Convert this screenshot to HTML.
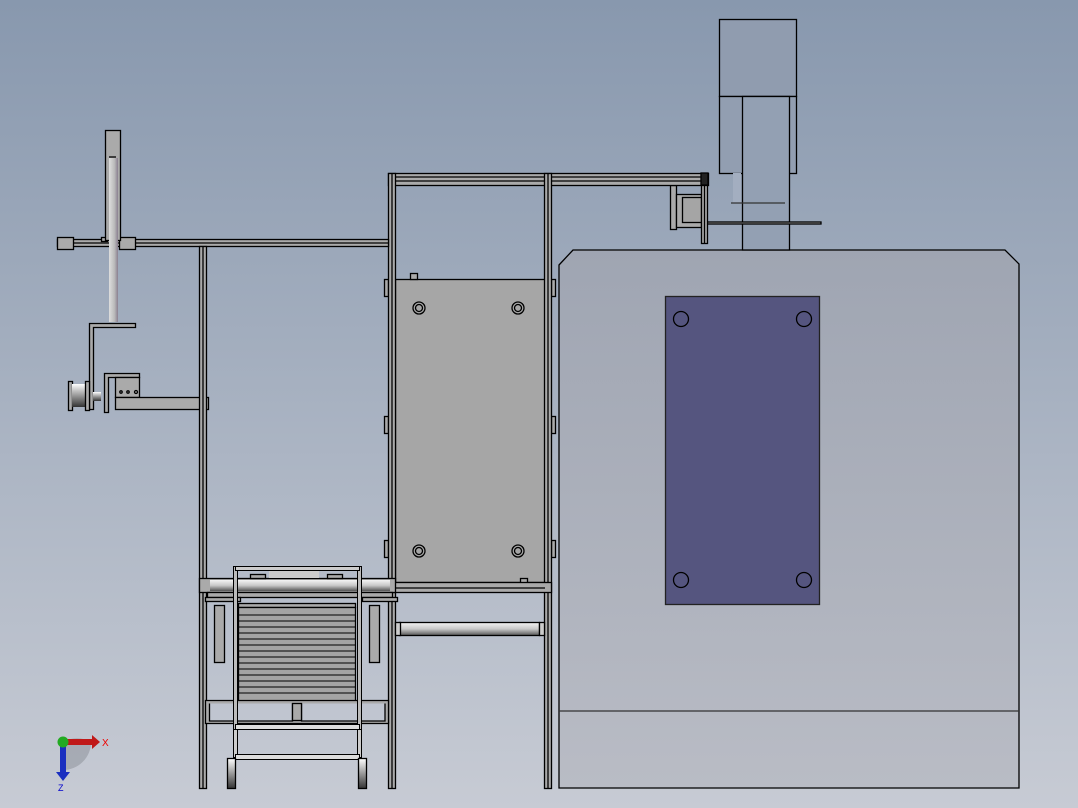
<!DOCTYPE html>
<html><head><meta charset="utf-8"><style>html,body{margin:0;padding:0;width:1078px;height:808px;overflow:hidden}svg{display:block}</style></head>
<body>
<svg width="1078" height="808" viewBox="0 0 1078 808" xmlns="http://www.w3.org/2000/svg">
<defs>
<linearGradient id="bg" x1="0" y1="0" x2="0" y2="1"><stop offset="0" stop-color="#8898ae"/><stop offset="1" stop-color="#c7cbd4"/></linearGradient>
<linearGradient id="body" x1="0" y1="0" x2="0" y2="1"><stop offset="0" stop-color="#9fa5b2"/><stop offset="1" stop-color="#b9bcc5"/></linearGradient>
<linearGradient id="rod" x1="0" y1="0" x2="0" y2="1"><stop offset="0" stop-color="#f4f4f4"/><stop offset="0.5" stop-color="#c8c8c8"/><stop offset="1" stop-color="#555"/></linearGradient>
<linearGradient id="rodv" x1="0" y1="0" x2="1" y2="0"><stop offset="0" stop-color="#ddd"/><stop offset="0.6" stop-color="#bbb"/><stop offset="1" stop-color="#8a8090"/></linearGradient>
<linearGradient id="wheel" x1="0" y1="0" x2="0" y2="1"><stop offset="0" stop-color="#fff"/><stop offset="1" stop-color="#333"/></linearGradient>
</defs>
<rect width="1078" height="808" fill="url(#bg)"/>
<g stroke="#000" stroke-width="1.3" fill="none">
<!-- machine body -->
<path d="M559,265 L573,250 L1005,250 L1019,264 L1019,788 L559,788 Z" fill="url(#body)"/>
<line x1="559" y1="711" x2="1019" y2="711" stroke="#333"/>
<rect x="665.5" y="296.5" width="154" height="308" fill="#55557f" stroke="#222"/>
<circle cx="681" cy="319" r="7.5"/><circle cx="804" cy="319" r="7.5"/><circle cx="681" cy="580" r="7.5"/><circle cx="804" cy="580" r="7.5"/>
<!-- motor -->
<rect x="719.5" y="19.5" width="77" height="77" fill="#909caf"/>
<rect x="719.5" y="96.5" width="77" height="77" fill="#929eb1"/>
<rect x="742.5" y="96.5" width="47" height="153.5" fill="#93a0b3"/>
<rect x="733" y="173" width="8" height="30" fill="#a3aec0" stroke="none"/>
<line x1="731" y1="203" x2="785" y2="203" stroke="#333"/>
<rect x="680" y="222" width="141" height="2" fill="#aaa"/>
<!-- right small bracket -->
<rect x="670.5" y="185.5" width="6" height="44" fill="#aaa"/>
<rect x="676.5" y="194.5" width="25" height="33" fill="#aaa"/>
<rect x="682.5" y="197.5" width="19" height="25" fill="#a5a5a5"/>
<rect x="701.5" y="173.5" width="6" height="70" fill="#aaa"/>
<line x1="704.5" y1="186" x2="704.5" y2="243"/>
<!-- middle frame top beam -->
<rect x="388.5" y="173.5" width="320" height="12" fill="#aaa"/>
<line x1="388" y1="177" x2="708" y2="177"/><line x1="388" y1="181" x2="708" y2="181"/>
<rect x="701" y="173" width="7" height="12" fill="#222"/>
<!-- gray panel -->
<rect x="395.5" y="279.5" width="150" height="303" fill="#a6a6a6"/>
<rect x="410.5" y="273.5" width="7" height="6" fill="#aaa"/>
<rect x="520.5" y="578.5" width="7" height="6" fill="#aaa"/>
<g fill="none"><circle cx="419" cy="308" r="6"/><circle cx="419" cy="308" r="3.5"/><circle cx="518" cy="308" r="6"/><circle cx="518" cy="308" r="3.5"/><circle cx="419" cy="551" r="6"/><circle cx="419" cy="551" r="3.5"/><circle cx="518" cy="551" r="6"/><circle cx="518" cy="551" r="3.5"/></g>
<rect x="384.5" y="279.5" width="4" height="17" fill="#aaa"/><rect x="384.5" y="416.5" width="4" height="17" fill="#aaa"/><rect x="384.5" y="540.5" width="4" height="17" fill="#aaa"/>
<rect x="551.5" y="279.5" width="4" height="17" fill="#aaa"/><rect x="551.5" y="416.5" width="4" height="17" fill="#aaa"/><rect x="551.5" y="540.5" width="4" height="17" fill="#aaa"/>
<!-- mid posts -->
<rect x="388.5" y="173.5" width="7" height="615" fill="#aaa"/><line x1="392" y1="173" x2="392" y2="788"/>
<rect x="544.5" y="173.5" width="7" height="615" fill="#aaa"/><line x1="548" y1="173" x2="548" y2="788"/>
<!-- mid lower beam -->
<rect x="388.5" y="582.5" width="163" height="10" fill="#aaa"/><line x1="395" y1="588" x2="545" y2="588"/>
<rect x="399.5" y="622.5" width="140" height="13" fill="url(#rod)"/>
<rect x="395.5" y="622.5" width="5" height="13" fill="#ccc"/><rect x="539.5" y="622.5" width="5" height="13" fill="#ccc"/>
<!-- left top beam -->
<rect x="57.5" y="239.5" width="331" height="7" fill="#aaa"/><line x1="57" y1="243" x2="388" y2="243"/>
<rect x="57.5" y="237.5" width="16" height="12" fill="#aaa"/>
<rect x="119.5" y="237.5" width="16" height="12" fill="#aaa"/>
<rect x="101.5" y="237.5" width="6" height="4" fill="#aaa"/>
<!-- left vertical rod assembly -->
<rect x="105.5" y="130.5" width="15" height="110" fill="#aaa"/>
<rect x="109" y="158" width="9" height="164" fill="url(#rodv)" stroke="none"/>
<line x1="109" y1="157" x2="116" y2="157"/>
<!-- L bracket -->
<path d="M89.5,323.5 L135.5,323.5 L135.5,327.5 L93.5,327.5 L93.5,409.5 L89.5,409.5 Z" fill="#aaa"/>
<!-- spool -->
<rect x="68.5" y="381.5" width="4" height="29" fill="#aaa"/>
<rect x="72" y="384" width="13" height="23" fill="url(#wheel)" stroke="none"/>
<rect x="85.5" y="381.5" width="4" height="29" fill="#aaa"/>
<rect x="93" y="392" width="8" height="9" fill="url(#wheel)" stroke="none"/>
<path d="M104.5,412.5 L104.5,373.5 L139.5,373.5 L139.5,377.5 L108.5,377.5 L108.5,412.5 Z" fill="#aaa"/>
<rect x="115.5" y="377.5" width="24" height="20" fill="#aaa"/>
<rect x="115.5" y="397.5" width="93" height="12" fill="#aaa"/>
<circle cx="121" cy="392" r="1.2"/><circle cx="128" cy="392" r="1.2"/><circle cx="136" cy="392" r="1.5"/>
<!-- left post -->
<rect x="199.5" y="246.5" width="7" height="542" fill="#aaa"/><line x1="203" y1="246" x2="203" y2="788"/>
<!-- left lower machine -->
<rect x="199.5" y="578.5" width="196" height="14" fill="#aaa"/>
<rect x="210" y="580" width="180" height="11" fill="url(#rod)" stroke="none"/>
<rect x="207.5" y="592.5" width="185" height="5" fill="#aaa"/>
<rect x="205.5" y="597.5" width="35" height="4" fill="#aaa"/>
<rect x="362.5" y="597.5" width="35" height="4" fill="#aaa"/>
<rect x="214.5" y="605.5" width="10" height="57" fill="#aaa"/>
<rect x="369.5" y="605.5" width="10" height="57" fill="#aaa"/>
<rect x="238.5" y="603.5" width="117" height="4" fill="#aaa"/>
<rect x="238.5" y="607.5" width="117" height="95" fill="#a4a4a4"/>
<g stroke-width="1"><line x1="239" y1="615" x2="355" y2="615"/><line x1="239" y1="621" x2="355" y2="621"/><line x1="239" y1="627" x2="355" y2="627"/><line x1="239" y1="633" x2="355" y2="633"/><line x1="239" y1="639" x2="355" y2="639"/><line x1="239" y1="645" x2="355" y2="645"/><line x1="239" y1="651" x2="355" y2="651"/><line x1="239" y1="657" x2="355" y2="657"/><line x1="239" y1="663" x2="355" y2="663"/><line x1="239" y1="669" x2="355" y2="669"/><line x1="239" y1="675" x2="355" y2="675"/><line x1="239" y1="681" x2="355" y2="681"/><line x1="239" y1="687" x2="355" y2="687"/><line x1="239" y1="693" x2="355" y2="693"/></g>
<path d="M205.5,700.5 L388.5,700.5 L388.5,723.5 L205.5,723.5 Z M209.5,703.5 L209.5,721 L292.5,721 L292.5,703.5 M301.5,703.5 L301.5,721 L385,721 L385,703.5" fill="#aaa"/>
<rect x="292.5" y="703.5" width="9" height="17" fill="#aaa"/>
<rect x="250.5" y="574.5" width="15" height="4" fill="#aaa"/><rect x="327.5" y="574.5" width="15" height="4" fill="#aaa"/>
<rect x="269" y="566" width="50" height="12" fill="#ccc" stroke="none"/>
<!-- cart frame -->
<g stroke-width="1">
<rect x="233.5" y="566.5" width="4" height="163" fill="#bbb"/>
<rect x="357.5" y="566.5" width="4" height="163" fill="#bbb"/>
<rect x="233.5" y="729.5" width="4" height="28" fill="#ccc"/>
<rect x="357.5" y="729.5" width="4" height="28" fill="#ccc"/>
<rect x="235.5" y="566.5" width="124" height="4" fill="#ccc"/>
<rect x="235.5" y="724.5" width="124" height="5" fill="#ddd"/>
<rect x="235.5" y="754.5" width="124" height="5" fill="#ddd"/>
</g>
<rect x="227.5" y="758.5" width="8" height="30" fill="url(#wheel)"/>
<rect x="358.5" y="758.5" width="8" height="30" fill="url(#wheel)"/>
</g>
<!-- triad -->
<path d="M63,742 L63,742 A28,28 0 0 1 91,742 A28,28 0 0 1 63,770 Z" fill="#8a8e96" opacity="0.5"/>
<rect x="60" y="742" width="6" height="32" fill="#1a2fc0"/>
<path d="M56,772 L70,772 L63,781 Z" fill="#1a2fc0"/>
<rect x="63" y="739" width="30" height="6" fill="#c01818"/>
<path d="M92,735 L100,742 L92,749 Z" fill="#c01818"/>
<circle cx="63" cy="742" r="5.5" fill="#22aa22"/>
<text x="102" y="746" font-family="Liberation Sans, sans-serif" font-size="10" fill="#e00">X</text>
<text x="58" y="791" font-family="Liberation Sans, sans-serif" font-size="9" fill="#00c">Z</text>
</svg>
</body></html>
